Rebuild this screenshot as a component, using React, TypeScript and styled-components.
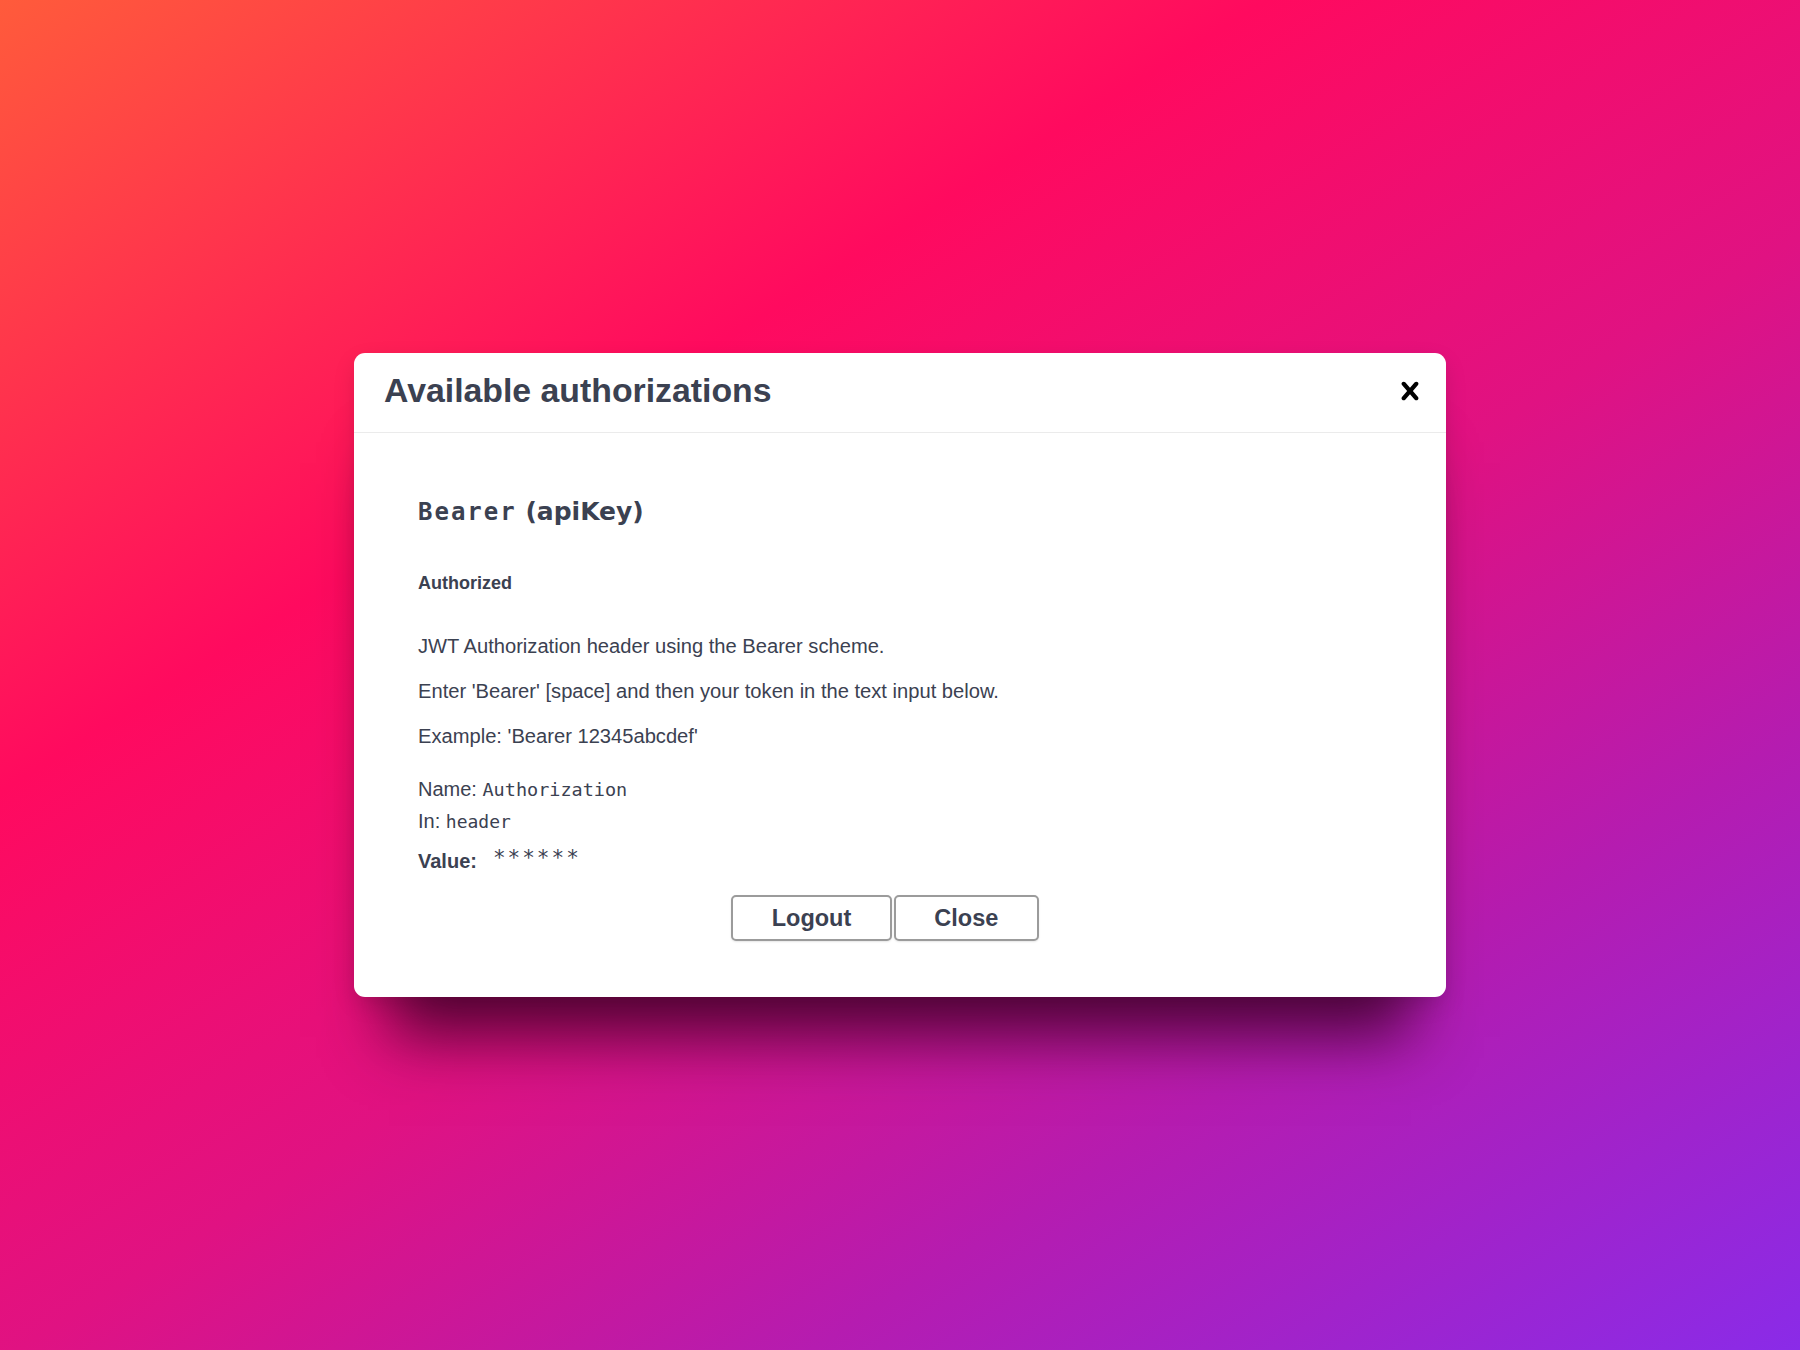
import styled, { createGlobalStyle } from "styled-components";

const GlobalStyle = createGlobalStyle`
  html, body {
    margin: 0;
    padding: 0;
  }
  body {
    font-family: "Liberation Sans", Arial, sans-serif;
  }
`;

const Backdrop = styled.div`
  min-height: 100vh;
  display: flex;
  align-items: center;
  justify-content: center;
  background: linear-gradient(
    148deg,
    #ff5b3b 0%,
    #ff0a5f 32%,
    #e01282 55%,
    #b51cb0 75%,
    #8a2be8 100%
  );
`;

const Modal = styled.div`
  width: 1092px;
  background: #fff;
  border-radius: 11px;
  box-shadow: 0 75px 60px -35px rgba(60, 0, 40, 0.85),
    0 8px 24px -4px rgba(0, 0, 0, 0.18);
  overflow: hidden;
`;

const Header = styled.header`
  display: flex;
  align-items: center;
  justify-content: space-between;
  height: 80px;
  box-sizing: border-box;
  padding: 0 18px 4px 30px;
  border-bottom: 1px solid #ebebeb;
`;

const Title = styled.h3`
  margin: 0;
  font-family: "Liberation Sans", Arial, sans-serif;
  font-size: 33.8px;
  font-weight: 700;
  line-height: 1;
  color: #3b4151;
`;

const CloseButton = styled.button`
  border: none;
  background: none;
  padding: 0;
  width: 36px;
  height: 36px;
  display: flex;
  cursor: pointer;
`;

const Body = styled.div`
  padding: 64px 94px 56px 64px;
  color: #3b4151;
`;

const SchemeTitle = styled.h4`
  margin: 0;
  font-family: "DejaVu Sans", sans-serif;
  font-size: 25px;
  font-weight: 700;
  line-height: 29px;
`;

const SchemeCode = styled.code`
  font-family: "DejaVu Sans Mono", monospace;
  font-size: 24px;
  letter-spacing: 2px;
`;

const Status = styled.h6`
  margin: 45px 0 0;
  font-family: "Liberation Sans", Arial, sans-serif;
  font-size: 18px;
  font-weight: 700;
  line-height: 22px;
`;

const Description = styled.div`
  margin-top: 37px;
`;

const Paragraph = styled.p`
  margin: 0 0 15px;
  font-size: 20.15px;
  line-height: 30px;
  &:last-child {
    margin-bottom: 0;
  }
`;

const MetaList = styled.div`
  margin-top: 22px;
`;

const MetaRow = styled.div<{ $gap?: number }>`
  font-size: 20px;
  line-height: 32px;
  margin-top: ${(p) => p.$gap ?? 0}px;
`;

const MetaLabel = styled.b`
  font-weight: 700;
  margin-right: 16px;
`;

const Mono = styled.code<{ $size?: number; $spacing?: number; $raise?: number }>`
  font-family: "DejaVu Sans Mono", monospace;
  font-size: ${(p) => p.$size ?? 18.5}px;
  line-height: 1;
  letter-spacing: ${(p) => p.$spacing ?? 0}px;
  vertical-align: ${(p) => p.$raise ?? 0}px;
`;

const ButtonRow = styled.div`
  margin-top: 18px;
  display: flex;
  justify-content: center;
  gap: 2px;
`;

const Button = styled.button`
  font-family: "Liberation Sans", Arial, sans-serif;
  font-size: 23.5px;
  font-weight: 700;
  line-height: 26px;
  color: #3b4151;
  background: #fff;
  border: 2px solid #9b9b9b;
  border-radius: 5px;
  padding: 8px 38.5px;
  box-shadow: 0 1px 2px rgba(0, 0, 0, 0.1);
  cursor: pointer;
`;

function CloseIcon() {
  return (
    <svg width="36" height="36" viewBox="0 0 20 20" fill="#000">
      <path d="M14.348 14.849c-.469.469-1.229.469-1.697 0L10 11.819l-2.651 3.029c-.469.469-1.229.469-1.697 0-.469-.469-.469-1.229 0-1.697l2.758-3.15-2.759-3.152c-.469-.469-.469-1.228 0-1.697.469-.469 1.228-.469 1.697 0L10 8.183l2.651-3.031c.469-.469 1.228-.469 1.697 0 .469.469.469 1.229 0 1.697l-2.758 3.152 2.758 3.15c.469.469.469 1.229 0 1.698z" />
    </svg>
  );
}

const description = [
  "JWT Authorization header using the Bearer scheme.",
  "Enter 'Bearer' [space] and then your token in the text input below.",
  "Example: 'Bearer 12345abcdef'",
];

function App() {
  return (
    <>
      <GlobalStyle />
      <Backdrop>
        <Modal>
          <Header>
            <Title>Available authorizations</Title>
            <CloseButton aria-label="Close">
              <CloseIcon />
            </CloseButton>
          </Header>
          <Body>
            <SchemeTitle>
              <SchemeCode>Bearer</SchemeCode> (apiKey)
            </SchemeTitle>
            <Status>Authorized</Status>
            <Description>
              {description.map((line) => (
                <Paragraph key={line}>{line}</Paragraph>
              ))}
            </Description>
            <MetaList>
              <MetaRow>
                Name: <Mono>Authorization</Mono>
              </MetaRow>
              <MetaRow>
                In: <Mono $size={18}>header</Mono>
              </MetaRow>
              <MetaRow $gap={8}>
                <MetaLabel>Value:</MetaLabel>
                <Mono $size={21} $spacing={2} $raise={3}>
                  ******
                </Mono>
              </MetaRow>
            </MetaList>
            <ButtonRow>
              <Button>Logout</Button>
              <Button>Close</Button>
            </ButtonRow>
          </Body>
        </Modal>
      </Backdrop>
    </>
  );
}

export default App;
